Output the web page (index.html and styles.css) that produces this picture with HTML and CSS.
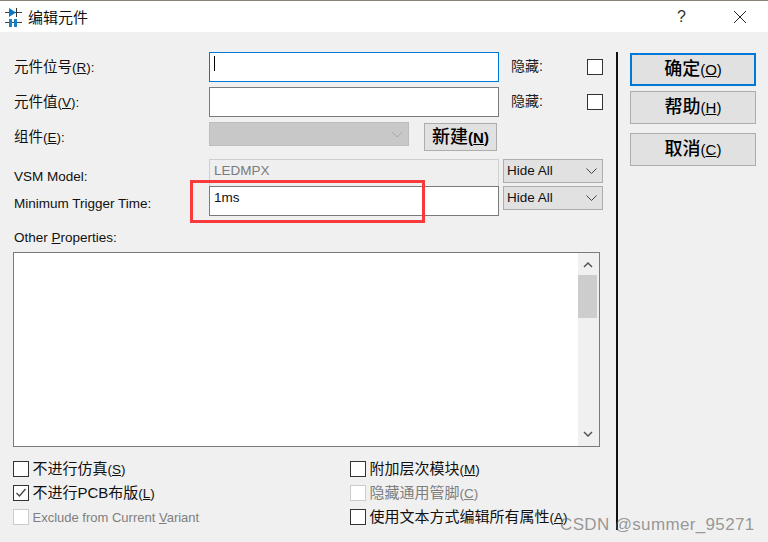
FILE: index.html
```html
<!DOCTYPE html>
<html>
  <head>
    <meta charset="utf-8">
    <title>编辑元件</title>
    <link rel="stylesheet" href="styles.css">
  </head>
  <body>
    <div class="titlebar">
      <svg class="appicon" width="17" height="20" viewBox="0 0 17 20">
        <path d="M0 5.500h17M0 15.500h17" stroke="#444" fill="none"/>
        <path d="M4 1l7 4.500-7 4.500z" fill="#0a78c8"/>
        <path d="M11.500 1v9" stroke="#333" fill="none"/>
        <path d="M4 12h3v8h-3zM9 12h3v8h-3z" fill="#1a7fc4"/>
      </svg>
      <span class="title">编辑元件</span>
      <span class="help">?</span>
      <svg class="close" width="14" height="14" viewBox="0 0 14 14">
        <path d="M1 1l12 12M13 1L1 13" stroke="#222" fill="none"/>
      </svg>
    </div>

    <div class="dialog">
      <div class="left">
        <div class="row row1">
          <label>元件位号<span class="acc">(<u>R</u>):</span></label>
          <div class="input focus"><i class="caret"></i></div>
          <span class="hide-label">隐藏:</span>
          <span class="check"></span>
        </div>
        <div class="row row1">
          <label>元件值<span class="acc">(<u>V</u>):</span></label>
          <div class="input"></div>
          <span class="hide-label">隐藏:</span>
          <span class="check"></span>
        </div>
        <div class="row row3">
          <label>组件<span class="acc">(<u>E</u>):</span></label>
          <div class="combo-off">
            <svg width="12" height="7" viewBox="0 0 12 7"><path d="M1 1l5 5 5-5" stroke="#a8a8a8" fill="none"/></svg>
          </div>
          <div class="newbtn">新建<span class="acc">(<u>N</u>)</span></div>
        </div>
        <div class="row row4">
          <label class="en">VSM Model:</label>
          <div class="input off">LEDMPX</div>
          <div class="select">Hide All
            <svg width="11" height="6" viewBox="0 0 11 6"><path d="M.5.5l5 5 5-5" stroke="#444" fill="none"/></svg>
          </div>
        </div>
        <div class="row row5">
          <label class="en">Minimum Trigger Time:</label>
          <div class="input val">1ms</div>
          <div class="select">Hide All
            <svg width="11" height="6" viewBox="0 0 11 6"><path d="M.5.5l5 5 5-5" stroke="#444" fill="none"/></svg>
          </div>
        </div>
        <div class="other-label">Other <u>P</u>roperties:</div>
        <div class="textarea">
          <div class="scrollbar">
            <svg width="10" height="6" viewBox="0 0 10 6"><path d="M1 5l4-4 4 4" stroke="#555" stroke-width="1.500" fill="none"/></svg>
            <div class="thumb"></div>
            <svg class="down" width="10" height="6" viewBox="0 0 10 6"><path d="M1 1l4 4 4-4" stroke="#555" stroke-width="1.500" fill="none"/></svg>
          </div>
        </div>
        <div class="options">
          <div class="opt"><span class="check"></span><span class="opt-text">不进行仿真<span class="acc">(<u>S</u>)</span></span></div>
          <div class="opt"><span class="check"></span><span class="opt-text">附加层次模块<span class="acc">(<u>M</u>)</span></span></div>
          <div class="opt"><span class="check">
            <svg width="14" height="14" viewBox="0 0 14 14"><path d="M2.500 7l3 3 6-7" stroke="#444" stroke-width="1.300" fill="none"/></svg>
          </span><span class="opt-text">不进行PCB布版<span class="acc">(<u>L</u>)</span></span></div>
          <div class="opt dim"><span class="check"></span><span class="opt-text">隐藏通用管脚<span class="acc">(<u>C</u>)</span></span></div>
          <div class="opt dim en"><span class="check"></span><span>Exclude from Current <u>V</u>ariant</span></div>
          <div class="opt"><span class="check"></span><span class="opt-text">使用文本方式编辑所有属性<span class="acc">(<u>A</u>)</span></span></div>
        </div>
      </div>
      <div class="divider"></div>
      <div class="right">
        <div class="btn default">确定<span class="acc">(<u>O</u>)</span></div>
        <div class="btn">帮助<span class="acc">(<u>H</u>)</span></div>
        <div class="btn third">取消<span class="acc">(<u>C</u>)</span></div>
      </div>
    </div>

    <div class="redbox"></div>
    <div class="watermark">CSDN @summer_95271</div>
  </body>
</html>
```

FILE: styles.css
```css
*{
  margin: 0;
  padding: 0;
  box-sizing: border-box;
}
html,body{
  width: 768px;
  height: 542px;
  overflow: hidden;
}
body{
  background: #f0f0f0;
  font-family: "Liberation Sans", "Noto Sans CJK SC", sans-serif;
  font-size: 14.5px;
  color: #111;
  position: relative;
}
u{
  text-underline-offset: 1px;
}
.acc{
  font-size: 13.5px;
}
.en{
  font-size: 13.5px;
}

/* title bar */
.titlebar{
  height: 32px;
  background: #fff;
  border-top: 1px solid #8a8578;
  display: flex;
  align-items: center;
  padding-left: 5px;
}
.title{
  margin-left: 6px;
  font-size: 15px;
}
.help{
  margin-left: auto;
  font-size: 16px;
  color: #333;
}
.close{
  margin: 0 21px 0 47px;
}

.dialog{
  display: flex;
  padding-top: 20px;
}
.left{
  width: 616px;
  padding-left: 13px;
  flex: none;
}

/* form rows */
.row{
  display: flex;
  align-items: center;
  margin-bottom: 5px;
}
.row label{
  width: 196px;
  padding-left: 1px;
}
.row1{
  height: 30px;
}
.row1 label,
.hide-label{
  margin-bottom: 4px;
}
.input{
  width: 290px;
  height: 30px;
  background: #fff;
  border: 1px solid #7a7a7a;
  flex: none;
}
.input.focus{
  border-color: #0078d7;
  padding: 3px 0 0 4px;
}
.caret{
  display: block;
  width: 1px;
  height: 15px;
  background: #000;
}
.hide-label{
  width: 76px;
  margin-left: 12px;
  font-size: 14px;
  color: #222;
}
.check{
  width: 16px;
  height: 16px;
  border: 1px solid #333;
  background: #fff;
  display: inline-block;
  flex: none;
}
.row3{
  height: 29px;
  margin-bottom: 8px;
  align-items: flex-start;
}
.row3 label{
  margin-top: 3px;
}
.combo-off{
  width: 200px;
  height: 24px;
  background: #c8c8c8;
  border: 1px solid #bcbcbc;
  display: flex;
  align-items: center;
  justify-content: flex-end;
  padding-right: 5px;
}
.newbtn{
  width: 73px;
  height: 28px;
  margin: 1px 0 0 15px;
  background: #e1e1e1;
  border: 1px solid #adadad;
  text-align: center;
  font-size: 18px;
  font-weight: 500;
  line-height: 26px;
  color: #000;
}
.newbtn .acc{
  font-size: 15px;
  font-weight: 700;
}
.row4{
  height: 27px;
  margin-bottom: 0;
  align-items: flex-start;
}
.row4 label{
  margin-top: 10px;
}
.input.off{
  height: 27px;
  background: #efefef;
  border-color: #cfcfcf;
  border-bottom: none;
  color: #7b7b7b;
  font-size: 13.5px;
  padding: 3px 0 0 4px;
}
.select{
  width: 100px;
  height: 24px;
  margin-left: 4px;
  background: #e1e1e1;
  border: 1px solid #adadad;
  font-size: 13.5px;
  line-height: 22px;
  padding-left: 3px;
  display: flex;
  align-items: center;
  justify-content: space-between;
  padding-right: 5px;
}
.row5{
  height: 30px;
  margin-bottom: 0;
  align-items: flex-start;
}
.row5 label{
  margin-top: 10px;
}
.input.val{
  font-size: 13.5px;
  padding: 3px 0 0 4px;
}
.other-label{
  font-size: 13.5px;
  margin: 14px 0 0 1px;
  height: 22px;
  line-height: 16px;
}

/* list */
.textarea{
  width: 587px;
  height: 195px;
  background: #fff;
  border: 1px solid #7a7a7a;
  display: flex;
  justify-content: flex-end;
}
.scrollbar{
  width: 21px;
  background: #f0f0f0;
  display: flex;
  flex-direction: column;
  align-items: center;
  padding: 9px 2px 0 0;
}
.thumb{
  width: 19px;
  height: 43px;
  background: #cdcdcd;
  margin-top: 7px;
}
.down{
  margin-top: auto;
  margin-bottom: 9px;
}

/* option checkboxes */
.options{
  display: grid;
  grid-template-columns: 337px 1fr;
  grid-auto-rows: 24px;
  margin-top: 10px;
  font-size: 15px;
}
.opt{
  display: flex;
  align-items: center;
  gap: 3.5px;
  white-space: nowrap;
}
.opt-text{
  margin-bottom: 4px;
}
.opt.dim{
  color: #7f7f7f;
}
.opt.dim .check{
  border-color: #ccc;
}
.opt.en{
  font-size: 13px;
}

.divider{
  width: 2px;
  height: 478px;
  background: #111;
  flex: none;
}
.right{
  margin-left: 12px;
  padding-top: 1px;
}
.btn{
  width: 126px;
  height: 33px;
  background: #e1e1e1;
  border: 1px solid #adadad;
  margin-bottom: 5px;
  text-align: center;
  font-size: 18px;
  font-weight: 500;
  line-height: 31px;
  color: #000;
}
.btn .acc{
  font-size: 15px;
}
.btn.default{
  border: 2px solid #0078d7;
  line-height: 29px;
}
.btn.third{
  margin-top: 9px;
}

/* annotation drawn over the screenshot */
.redbox{
  position: absolute;
  left: 190px;
  top: 180px;
  width: 235px;
  height: 43px;
  border: 3px solid #f93a3a;
}
.watermark{
  position: absolute;
  left: 560px;
  top: 515px;
  font-size: 17px;
  color: rgba(100,100,100,.65);
  letter-spacing: .35px;
}
```
